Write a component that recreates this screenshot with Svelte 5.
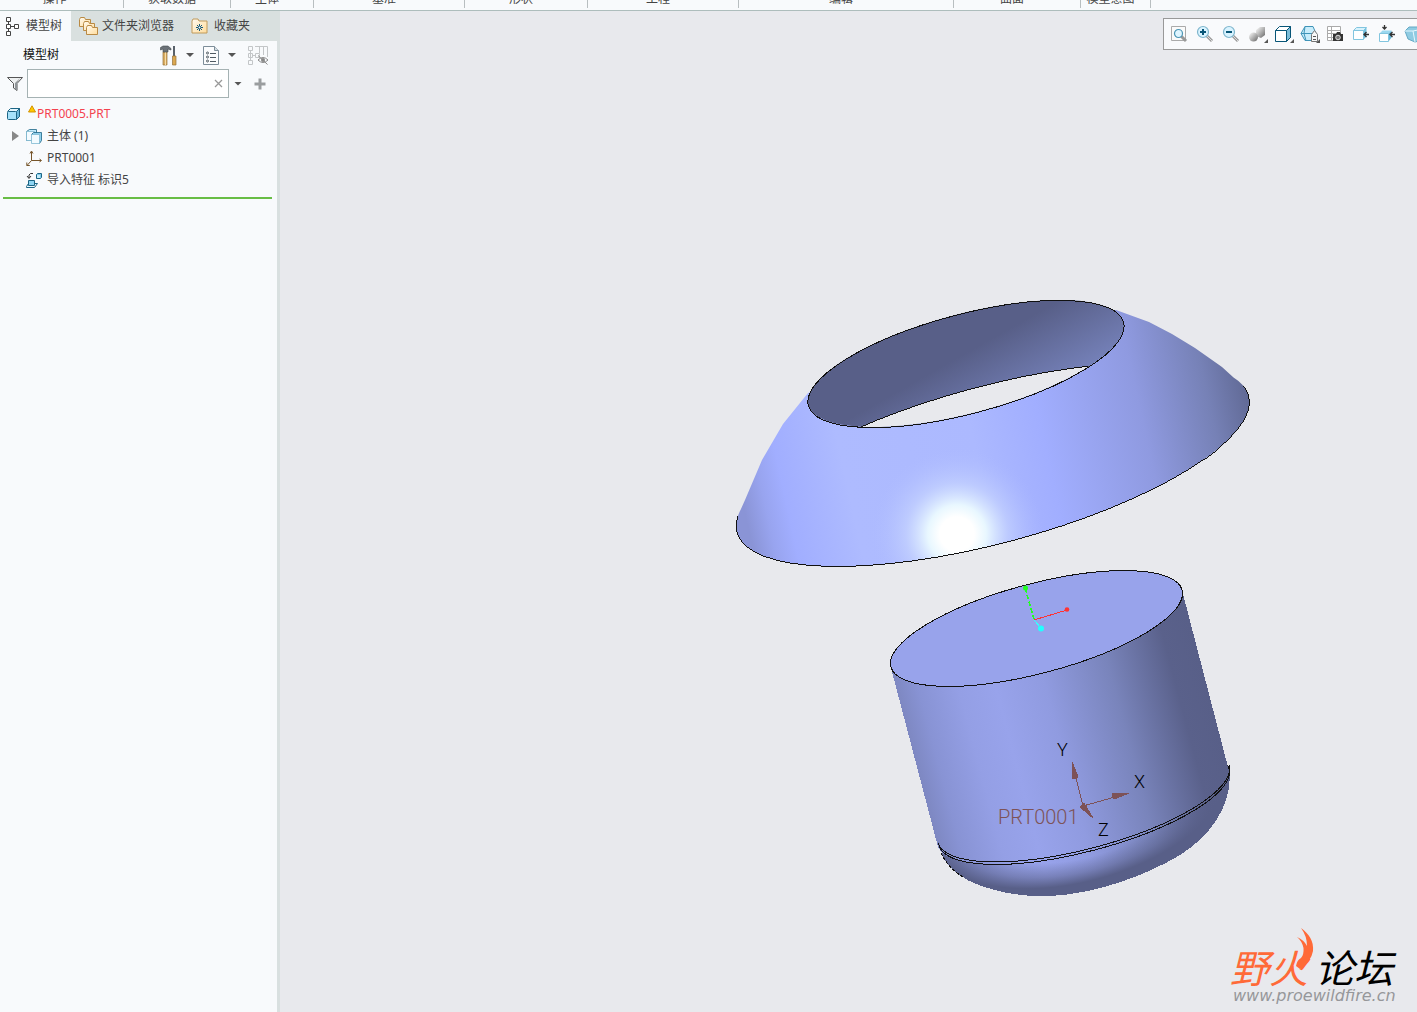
<script>
  const groups = [
    { name: '操作', w: 124 },
    { name: '获取数据', w: 107 },
    { name: '主体', w: 83 },
    { name: '基准', w: 151 },
    { name: '形状', w: 123 },
    { name: '工程', w: 151 },
    { name: '编辑', w: 215 },
    { name: '曲面', w: 127 },
    { name: '模型意图', w: 70 }
  ];
  const tools = ['重新调整', '放大', '缩小', '渲染', '显示样式', '已保存方向', '视图管理器', '显示组合', '注释方向', '透视图'];
  let query = $state('');
</script>

<div class="page">
  <header class="ribbon">
    {#each groups as g}
      <div class="group" style:width="{g.w}px"><span>{g.name}</span></div>
    {/each}
  </header>

  <div class="main">
    <aside>
      <nav class="tabs">
        <button class="tab active">
          <svg width="14" height="20" viewBox="0 0 14 20" fill="#fff" stroke="#444"><path d="M2.500 5v10M5 10.500h4" fill="none" /><path d="M.5 1.500h4v4h-4zM.5 8.500h4v4h-4zM.5 15.500h4v4h-4zM8.500 8.500h4v4h-4z" /></svg>
          模型树
        </button>
        <button class="tab folders">
          <svg width="20" height="20" viewBox="0 0 20 20" stroke="#b98a45"><defs><linearGradient id="fold" x2="1" y2="1"><stop stop-color="#fffaf0" /><stop offset="1" stop-color="#ffdc9b" /></linearGradient></defs><g fill="url(#fold)"><path d="M.5 10.500v-7l1-2h4l1 2h5v7z" /><path d="M4.500 14.500v-7l1-2h4l1 2h5v7z" /><path d="M7.500 18.500v-7l1-2h4l1 2h5v7z" /></g></svg>
          文件夹浏览器
        </button>
        <button class="tab favs">
          <svg width="18" height="18" viewBox="0 0 18 18"><path d="M1 16V4l1-2h5l1 2h8v12z" fill="url(#fold)" stroke="#c09a5b" /><path d="M8.500 7v7M5 10.500h7M6 8l5 5M11 8l-5 5" stroke="#155a7c" /><circle cx="8.500" cy="10.500" r="1" fill="#fff" /></svg>
          收藏夹
        </button>
      </nav>

      <div class="head">
        <h1>模型树</h1>
        <button aria-label="设置" class="ic">
          <svg width="18" height="21" viewBox="0 0 18 21"><path d="M3 7h4v13H3z" fill="#d9ad61" stroke="#96713a" stroke-width=".7" /><path d="M5.500 7v13" stroke="#f7dca6" /><path d="M.5 5V2.500L3 1h5l3 2.500V5L8 4v3H3V4z" fill="#6c7278" stroke="#44494e" stroke-width=".6" /><path d="M14 1v10" stroke="#59616a" stroke-width="2" /><path d="M12.500 11h3.500v9h-3.500z" fill="#dba851" stroke="#96713a" stroke-width=".7" /></svg>
        </button>
        <button aria-label="设置菜单" class="caret"></button>
        <button aria-label="显示" class="ic show">
          <svg width="17" height="21" viewBox="0 0 17 21"><path d="M.5 1.500h11l4 4v14H.5z" fill="#fbfcfd" stroke="#7d8d99" /><path d="M11.500 1.500v4h4" fill="#d4dde2" stroke="#7d8d99" /><g fill="none" stroke="#4f5a62"><circle cx="4.500" cy="8" r="1" /><circle cx="4.500" cy="12" r="1" /><circle cx="4.500" cy="16" r="1" /><path d="M7 8.500h6M7 12.500h6M7 16.500h6" /></g></svg>
        </button>
        <button aria-label="显示菜单" class="caret"></button>
        <button aria-label="隐藏树列" class="ic hidecol">
          <svg width="22" height="21" viewBox="0 0 22 21" fill="none" stroke="#c3c6c8"><path d="M.5 1.500h4v4h-4zM.5 8.500h4v4h-4zM.5 15.500h4v4h-4zM7.500 8.500h4v4h-4zM2.500 6v9M5 10.500h2M7 1.500h12.500V12M11.500 2v6M15.500 2v8" /><path d="M10 15q5-5 10 0-5 5-10 0M10 10.500l9.500 9" stroke="#888" /><circle cx="15" cy="15" r="2" fill="#888" stroke="none" /></svg>
        </button>
      </div>

      <div class="filter">
        <svg width="16" height="16" viewBox="0 0 16 16"><path d="M.5 1.500h15L10 7.500v7l-3.500-2.500V7.500z" fill="#eef0f1" stroke="#555" /><path d="M10 7v7.500L8 13V7l5-5z" fill="#909599" /></svg>
        <div class="box">
          <input aria-label="筛选模型树" bind:value={query} />
          <button aria-label="清除" onclick={() => (query = '')}><svg width="9" height="9" viewBox="0 0 9 9"><path d="M1 1l7 7M8 1L1 8" stroke="#999" stroke-width="1.300" /></svg></button>
        </div>
        <button aria-label="筛选菜单" class="caret"></button>
        <button aria-label="添加" class="ic plus"><svg width="12" height="12" viewBox="0 0 12 12"><path d="M6 .5v11M.5 6h11" stroke="#9a9d9f" stroke-width="3" /></svg></button>
      </div>

      <ul class="tree">
        <li class="root">
          <svg width="14" height="14" viewBox="0 0 14 14" stroke="#1c6585"><path d="M.5 4.500l3-3h9v8l-3 3" fill="#e4f7ff" /><path d="M9.500 4.500l3-3v8l-3 3z" fill="#6cb9dc" /><rect x=".5" y="4.500" width="9" height="8" rx="1" fill="#a6e2fb" /></svg>
          <svg class="warn" width="8" height="8" viewBox="0 0 8 8"><path d="M4 .8L7.500 7h-7z" fill="#ffc800" stroke="#d39300" /></svg>
          <span>PRT0005.PRT</span>
        </li>
        <li>
          <button aria-label="展开" class="expand"></button>
          <svg width="17" height="17" viewBox="0 0 17 17" stroke="#1c6585" stroke-width=".8"><path d="M.5 3.500l3-2h7v8l-2 3h-8z" fill="#c6edfd" /><path d="M.5 3.500h8v9h-8z" fill="#f4fbff" stroke="#7fb9d0" /><path d="M5.500 6.500l2-2h8v8l-2 3z" fill="#8fd0ec" /><path d="M5.500 6.500h8v9h-8z" fill="#f2fbff" stroke="#7fb9d0" /></svg>
          <span>主体 (1)</span>
        </li>
        <li>
          <i></i>
          <svg width="17" height="17" viewBox="0 0 17 17" fill="none" stroke="#76552a"><path d="M5.500 2v8.500H15M5.500 10.500L1 15.500M4 3.500L5.500 1 7 3.500M13.500 9l2 1.500-2 1.500M.8 12.500v3h3" /></svg>
          <span>PRT0001</span>
        </li>
        <li>
          <i></i>
          <svg width="17" height="17" viewBox="0 0 17 17" stroke="#1c6585"><path d="M10.500 2.500l1-1h4v4l-1 1h-4z" fill="#7cc8e8" /><path d="M11 3h3v3h-3z" fill="#c4ebfa" stroke="none" /><path d="M.5 14.500l2-3h9l-3 4h-8z" fill="#eaf8fe" /><path d="M2.500 8.500h6v5h-6z" fill="#8ed4f2" /><path d="M7 1.500H4.500L3 3v3M1 4l2 2.500L5 4" fill="none" stroke="#333" /></svg>
          <span>导入特征 标识5</span>
        </li>
      </ul>
    </aside>

    <main>
      <svg class="scene" viewBox="280 11 1137 1001" role="img" aria-label="PRT0005">
        <defs>
          <linearGradient id="cone" gradientUnits="userSpaceOnUse" x1="738" y1="480" x2="1256" y2="368">
            <stop stop-color="#8a94d6" /><stop offset=".04" stop-color="#98a4ef" /><stop offset=".08" stop-color="#a1aeff" /><stop offset=".2" stop-color="#aebbff" /><stop offset=".45" stop-color="#acb9ff" /><stop offset=".58" stop-color="#a1aeff" /><stop offset=".77" stop-color="#8f9ae0" /><stop offset=".9" stop-color="#7681b6" /><stop offset="1" stop-color="#5a628b" />
          </linearGradient>
          <radialGradient id="shine" gradientUnits="userSpaceOnUse" cx="957" cy="534" r="86">
            <stop stop-color="#fff" /><stop offset=".2" stop-color="#fff" /><stop offset=".34" stop-color="#effeff" stop-opacity=".9" /><stop offset=".6" stop-color="#d2e0ff" stop-opacity=".45" /><stop offset="1" stop-color="#b0bdff" stop-opacity="0" />
          </radialGradient>
          <linearGradient id="inner" gradientUnits="userSpaceOnUse" x1="975" y1="348" x2="1011" y2="412">
            <stop stop-color="#585f88" /><stop offset="1" stop-color="#7581b9" />
          </linearGradient>
          <linearGradient id="side" gradientUnits="userSpaceOnUse" x1="915" y1="758" x2="1206" y2="681">
            <stop stop-color="#7e88c2" /><stop offset=".07" stop-color="#8893d4" /><stop offset=".2" stop-color="#949fe5" /><stop offset=".32" stop-color="#98a3eb" /><stop offset=".48" stop-color="#909be0" /><stop offset=".7" stop-color="#7984bb" /><stop offset=".9" stop-color="#5a618b" /><stop offset="1" stop-color="#585f88" />
          </linearGradient>
          <radialGradient id="dome" gradientUnits="userSpaceOnUse" cx="0" cy="0" r="1" gradientTransform="translate(1078 806) rotate(-14.800) scale(168 84)">
            <stop offset=".62" stop-color="#585f88" stop-opacity="0" /><stop offset=".78" stop-color="#585f88" stop-opacity=".5" /><stop offset=".9" stop-color="#585f88" />
          </radialGradient>
          <clipPath id="mouth"><ellipse cx="966" cy="363.500" rx="163" ry="49.700" transform="rotate(-14.800 966 363.500)" /></clipPath>
          <clipPath id="shade">
            <path d="M737 518L745 500 762 460 783 424 808 393 960 320 1116 310 1149 322 1172 334 1195 348 1222 367 1245 388 1180 460 850 540z" />
            <ellipse cx="992.800" cy="464" rx="264.800" ry="79.100" transform="rotate(-14.950 992.800 464)" />
          </clipPath>
          <clipPath id="rim"><path d="M700 516H741L1000 440 1243 386H1300V600H700z" /></clipPath>
          <clipPath id="band"><path d="M900 843H938L1080 800 1229 765H1260V900H900z" /></clipPath>
        </defs>

        <g clip-path="url(#shade)">
          <rect x="730" y="290" width="530" height="290" fill="url(#cone)" />
          <circle cx="957" cy="534" r="86" fill="url(#shine)" />
        </g>
        <g shape-rendering="crispEdges" stroke-width="1">
          <g clip-path="url(#mouth)">
            <rect x="800" y="295" width="330" height="140" fill="url(#inner)" />
            <ellipse cx="992.800" cy="465" rx="264.800" ry="79.100" transform="rotate(-14.950 992.800 465)" fill="#e8e9ed" stroke="#111" />
          </g>
          <ellipse cx="966" cy="364" rx="163" ry="49.700" transform="rotate(-14.800 966 364)" fill="none" stroke="#111" />
          <g clip-path="url(#rim)">
            <ellipse cx="992.800" cy="464" rx="264.800" ry="79.100" transform="rotate(-14.950 992.800 464)" fill="none" stroke="#111" />
          </g>
        </g>

        <g shape-rendering="crispEdges">
          <path d="M938 845L946 862C958 878 975 885 995 890Q1020 897 1050 896C1095 894 1145 876 1180 855C1210 836 1230 808 1230 775L1080 790z" fill="url(#side)" />
          <path d="M938 845L946 862C958 878 975 885 995 890Q1020 897 1050 896C1095 894 1145 876 1180 855C1210 836 1230 808 1230 775L1080 790z" fill="url(#dome)" />
          <path d="M891 668L938 847A150.600 44.800 -14.800 0 0 1229 771L1183 594z" fill="url(#side)" />
          <g fill="none" stroke="#111" clip-path="url(#band)">
            <ellipse cx="1083.500" cy="804" rx="150.600" ry="44.800" transform="rotate(-14.800 1083.500 804)" />
            <ellipse cx="1084" cy="807" rx="150" ry="44.300" transform="rotate(-14.800 1084 807)" />
            <path d="M941 853Q948 868 963 877" stroke-dasharray="3 2" />
          </g>
          <ellipse cx="1036.500" cy="628.500" rx="150.600" ry="44.800" transform="rotate(-14.800 1036.500 628.500)" fill="#98a3eb" stroke="#111" />
          <path d="M1025 588L1034 619" stroke="#2f2" stroke-width="1.500" stroke-dasharray="5 2" />
          <path d="M1034 620L1067 610" stroke="#f33" />
          <path d="M1034 620L1041 628" stroke="#3ff" />
        </g>
        <circle cx="1025.500" cy="588" r="2.500" fill="#2f2" />
        <circle cx="1067" cy="609.500" r="2.300" fill="#f33" />
        <circle cx="1041" cy="628.500" r="3" fill="#2ff" />

        <g stroke="#7d5257" fill="#7d5257" shape-rendering="crispEdges">
          <path d="M1083 806L1072 762M1083 806L1129 793M1083 806L1093 818" fill="none" />
          <path d="M1072 762L1073 779 1078 777zM1129 793L1112 794 1114 799zM1093 818L1080 807 1084 803z" />
        </g>
        <g class="axis"><text x="1057" y="756">Y</text><text x="1134" y="788">X</text><text x="1098" y="836">Z</text></g>
        <text class="csys" x="998" y="824">PRT0001</text>
      </svg>

      <div class="toolbar" role="toolbar" aria-label="视图">
        {#each tools as label, i}
          <button aria-label={label}>
            <svg width="20" height="20" viewBox="0 0 20 20" fill="none">
              {#if i === 0}
                <path d="M2.500 2.500h14v14h-14z" fill="#fafafa" stroke="#aaa" /><path d="M12 12l5 5" stroke="#999" stroke-width="3" /><circle cx="9.500" cy="9.500" r="4" fill="#dff5ff" stroke="#4b95b4" stroke-width="1.200" />
              {:else if i < 3}
                <path d="M11 11l6 6" stroke="#999" stroke-width="3" /><path d="M11 11l6 6" stroke="#ddd" /><circle cx="8" cy="8" r="5.500" fill="#d9f3ff" stroke="#7fb6cd" stroke-width="1.200" /><path d={i === 1 ? 'M5 8h6M8 5v6' : 'M5 8h6'} stroke="#075577" stroke-width="2" />
              {:else if i === 3}
                <defs><linearGradient id="metal" x2="1" y2="1"><stop stop-color="#fff" /><stop offset="1" stop-color="#666" /></linearGradient></defs>
                <path d="M9 6l4-3h5v8l-4 3-5-2z" fill="url(#metal)" /><circle cx="6.500" cy="13" r="4.500" fill="url(#metal)" />
              {:else if i === 4}
                <path d="M2.500 6.500l4-4h11v11l-4 4h-11z" fill="#fff" stroke="#075577" /><path d="M13.500 6.500l4-4v11l-4 4z" fill="#7bbcd8" /><path d="M2.500 6.500h11v11M13.500 6.500l4-4v11l-4 4" stroke="#075577" />
              {:else if i === 5}
                <path d="M2 9.500l4-7h8l3 7-3 7H6z" fill="#c9edfb" stroke="#3f94b8" /><path d="M2 9.500h15M6 2.500l-1 7 2 7" stroke="#3f94b8" /><path d="M12.500 10.500l3-4 3 4v7h-6z" fill="#f8f8f8" stroke="#777" /><path d="M14 12.500h3M14 15.500h3" stroke="#555" />
              {:else if i === 6}
                <path d="M2.500 2.500h13v14h-13zM2 6.500h13M2 9.500h13M2 13.500h13M6.500 3v13" fill="#fff" stroke="#aaa" /><path d="M8 10h3l1-2h3l1 2h2v7H8z" fill="#333" /><circle cx="13" cy="13.500" r="2.300" fill="#777" stroke="#ddd" />
              {:else if i === 7}
                <path d="M2.500 6.500l3-3h10l-3 3z" fill="#d7f2fc" stroke="#82c5df" /><path d="M12.500 6.500l3-3v9l-3 3z" fill="#76c3e2" /><path d="M2.500 6.500h10v9h-10z" fill="#fff" stroke="#82c5df" /><path d="M13 10.500h5M15.500 8l-2.500 2.500 2.500 2.500" stroke="#333" stroke-width="1.300" />
              {:else if i === 8}
                <path d="M2.500 9.500l3-3h9l-3 3z" fill="#9bd8ef" /><path d="M11.500 9.500l3-3v7l-3 4z" fill="#64b7d9" /><path d="M2.500 9.500h9v8h-9z" fill="#fff" stroke="#82c5df" /><path d="M13 10.500h5M15.500 8l-2.500 2.500 2.500 2.500M7.500 1v4M5.500 3l2 2 2-2" stroke="#333" stroke-width="1.300" />
              {:else}
                <path d="M2 7l4-4h14v13l-8 2-7-3z" fill="#8fcbe2" stroke="#65a9c5" /><path d="M2 7h8l10-2M10 7l2 11" stroke="#e6f8ff" />
              {/if}
            </svg>
            {#if i > 2 && i < 6}<b></b>{/if}
          </button>
        {/each}
      </div>

      <div class="brand">
        <div class="name"><span>野火</span><span class="dark">论坛</span></div>
        <svg width="20" height="44" viewBox="0 0 20 44"><path d="M6 2C14 8 19 15 18 25Q16 36 5 43L1 40Q2 34 6 32Q9 29 8.500 22Q7 15 2 11Q9 14 12 20Q12 10 6 2z" fill="#ff6a38" /></svg>
        <a href="http://www.proewildfire.cn">www.proewildfire.cn</a>
      </div>
    </main>
  </div>
</div>

<style>
  :global(body) { margin: 0; }
  .page {
    min-height: 100vh; display: flex; flex-direction: column; overflow: hidden;
    font: 12px/16px "Noto Sans", "Noto Sans CJK SC", sans-serif; color: #444; background: #f8fafc;
  }
  button { border: 0; padding: 0; background: none; font: inherit; color: inherit; cursor: pointer; }
  svg { flex: none; display: block; }

  .ribbon { display: flex; height: 10px; border-bottom: 1px solid #adbdbc; background: #f8fafc; }
  .group {
    box-sizing: border-box; flex: none; height: 8px; overflow: hidden; border-right: 1px solid #b8bec0;
    display: flex; align-items: flex-end; justify-content: center; white-space: nowrap; padding: 0 10px 1px 0;
  }
  .group:first-child { padding-right: 14px; }

  .main { flex: 1; display: flex; }
  aside { box-sizing: border-box; width: 280px; flex: none; border-right: 3px solid #d9e0e0; background: #f8fafc; }
  .tabs { display: flex; height: 30px; background: #d9e0df; margin-right: -3px; }
  .tab { display: flex; align-items: center; gap: 6px; white-space: nowrap; }
  .tab.active { width: 71px; padding-left: 6px; box-sizing: border-box; background: #f8fafc; }
  .folders { padding-left: 8px; gap: 3px; }
  .favs { padding-left: 17px; gap: 5px; }

  .head { display: flex; align-items: center; height: 28px; padding-left: 23px; }
  h1 { margin: 0; flex: none; width: 137px; font-size: 12px; font-weight: 400; line-height: 16px; color: #111; }
  .show { margin-left: 9px; }
  .head .caret { margin-left: 8px; }
  .hidecol { margin-left: 12px; }
  .caret { width: 8px; height: 4px; background: #555; clip-path: polygon(0 0, 100% 0, 50% 100%); }

  .filter { display: flex; align-items: center; height: 29px; padding-left: 7px; }
  .box {
    box-sizing: border-box; display: flex; align-items: center; width: 202px; height: 29px; margin: 0 5px 0 4px;
    padding-right: 5px; border: 1px solid #a5b2b3; background: #fff;
  }
  input { flex: 1; min-width: 0; border: 0; outline: 0; background: none; font: inherit; }
  .plus { margin-left: 12px; }

  .tree { list-style: none; margin: 0 5px 0 3px; padding: 5px 0 6px; border-bottom: 2px solid #68bd45; }
  li { display: flex; align-items: center; height: 22px; padding-left: 9px; }
  li span { margin-left: 4px; white-space: nowrap; }
  li.root { padding-left: 4px; color: #f4424f; }
  .warn { margin: 0 0 10px 7px; }
  .root span { margin-left: 1px; }
  .expand, i { width: 7px; height: 10px; margin-right: 7px; }
  .expand { background: #888; clip-path: polygon(0 0, 100% 50%, 0 100%); }

  main { position: relative; flex: 1; min-width: 0; overflow: hidden; background: #e8e9ed; }
  .scene { width: 100%; height: 100%; }
  text { font-family: Roboto, sans-serif; font-weight: 300; }
  .axis { font-size: 18px; fill: #000; }
  .csys { font-size: 20px; fill: #7d5257; }

  .toolbar {
    position: absolute; top: 7px; right: -12px; box-sizing: border-box; height: 32px; padding: 0 2px;
    display: flex; border: 1px solid #999; background: #f9fafc;
  }
  .toolbar button { position: relative; width: 26px; display: flex; align-items: center; justify-content: center; }
  .toolbar b { position: absolute; right: 2px; bottom: 6px; width: 4px; height: 4px; background: #555; clip-path: polygon(100% 0, 100% 100%, 0 100%); }

  .brand { position: absolute; right: 16px; bottom: 8px; width: 168px; }
  .name { display: flex; gap: 7px; margin-left: -3px; font: italic 400 39px/44px "Noto Sans CJK SC", sans-serif; color: #ff6a38; white-space: nowrap; }
  .dark { color: #000; }
  .brand svg { position: absolute; left: 62px; top: -18px; }
  .brand a { display: block; font: italic 16px/16px "DejaVu Sans", sans-serif; color: #96979a; text-decoration: none; }
</style>
